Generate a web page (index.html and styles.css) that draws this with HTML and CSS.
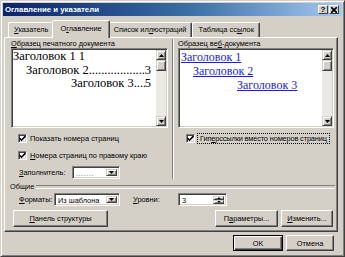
FILE: index.html
```html
<!DOCTYPE html>
<html lang="ru">
<head>
  <meta charset="UTF-8">
  <title>Оглавление и указатели</title>
  <link rel="stylesheet" href="styles.css">
</head>
<body>
  <div class="dialog">
    <div class="titlebar">
      <span class="title">Оглавление и указатели</span>
      <span class="tbtn">?</span>
      <span class="tbtn close">
        <svg width="6" height="6" viewBox="0 0 6 6"><path d="M0 0L6 6M6 0L0 6" stroke="#000" stroke-width="1.6"/></svg>
      </span>
    </div>

    <div class="tabs">
      <div class="tab"><u>У</u>казатель</div>
      <div class="tab active">О<u>г</u>лавление</div>
      <div class="tab">Список ил<u>л</u>юстраций</div>
      <div class="tab">Таблица сс<u>ы</u>лок</div>
    </div>

    <div class="panel">
      <div class="samples">
        <div class="col col-print">
          <div class="caption"><u>О</u>бразец печатного документа</div>
          <div class="preview">
            <div class="sheet print">
              <div class="toc-line">Заголовок 1 1</div>
              <div class="toc-line lvl2"><span>Заголовок 2</span><span class="leader"></span><span>3</span></div>
              <div class="toc-line lvl3"><span>Заголовок 3</span><span class="leader"></span><span>5</span></div>
            </div>
            <div class="scrollbar">
              <span class="sbtn"><svg width="5" height="3" viewBox="0 0 5 3"><path d="M2.5 0L5 3H0z"/></svg></span>
              <span class="thumb"></span>
              <span class="track"></span>
              <span class="sbtn"><svg width="5" height="3" viewBox="0 0 5 3"><path d="M0 0h5L2.5 3z"/></svg></span>
            </div>
          </div>
          <div class="check first">
            <span class="box"><svg width="7" height="7" viewBox="0 0 7 7"><path d="M0.5 3.2l2 2 4-4.2" stroke="#000" stroke-width="1.6" fill="none"/></svg></span>
            Показать номера страниц
          </div>
          <div class="check second">
            <span class="box"><svg width="7" height="7" viewBox="0 0 7 7"><path d="M0.5 3.2l2 2 4-4.2" stroke="#000" stroke-width="1.6" fill="none"/></svg></span>
            <span><u>Н</u>омера страниц по правому краю</span>
          </div>
          <div class="field-row fill-row">
            <span class="lbl lbl-fill"><u>З</u>аполнитель:</span>
            <div class="combo combo-fill">
              <span class="value dots">.......</span>
              <span class="drop"><svg width="5" height="3" viewBox="0 0 5 3"><path d="M0 0h5L2.5 3z"/></svg></span>
            </div>
          </div>
        </div>

        <div class="vsep"></div>

        <div class="col col-web">
          <div class="caption">Образец ве<u>б</u>-документа</div>
          <div class="preview">
            <div class="sheet web">
              <div class="toc-line"><a>Заголовок 1</a></div>
              <div class="toc-line lvl2"><a>Заголовок 2</a></div>
              <div class="toc-line lvl3-web"><a>Заголовок 3</a></div>
            </div>
            <div class="scrollbar">
              <span class="sbtn"><svg width="5" height="3" viewBox="0 0 5 3"><path d="M2.5 0L5 3H0z"/></svg></span>
              <span class="thumb"></span>
              <span class="track"></span>
              <span class="sbtn"><svg width="5" height="3" viewBox="0 0 5 3"><path d="M0 0h5L2.5 3z"/></svg></span>
            </div>
          </div>
          <div class="check first web-check">
            <span class="box"><svg width="7" height="7" viewBox="0 0 7 7"><path d="M0.5 3.2l2 2 4-4.2" stroke="#000" stroke-width="1.6" fill="none"/></svg></span>
            <span class="focus">Гип<u>е</u>рссылки вместо номеров страниц</span>
          </div>
        </div>
      </div>

      <div class="group-title"><span>Общие</span></div>

      <div class="field-row formats-row">
        <span class="lbl lbl-formats"><u>Ф</u>орматы:</span>
        <div class="combo combo-formats">
          <span class="value">Из шаблона</span>
          <span class="drop"><svg width="5" height="3" viewBox="0 0 5 3"><path d="M0 0h5L2.5 3z"/></svg></span>
        </div>
        <span class="lbl lbl-levels"><u>У</u>ровни:</span>
        <div class="combo spin">
          <span class="value">3</span>
          <span class="spin-btns">
            <span class="sbtn"><svg width="5" height="3" viewBox="0 0 5 3"><path d="M2.5 0L5 3H0z"/></svg></span>
            <span class="sbtn"><svg width="5" height="3" viewBox="0 0 5 3"><path d="M0 0h5L2.5 3z"/></svg></span>
          </span>
        </div>
      </div>

      <div class="button-row">
        <button class="btn btn-outline"><u>П</u>анель структуры</button>
        <span class="spacer"></span>
        <button class="btn btn-params">П<u>а</u>раметры...</button>
        <button class="btn btn-change"><u>И</u>зменить...</button>
      </div>
    </div>

    <div class="footer">
      <button class="btn btn-ok">OK</button>
      <button class="btn btn-cancel">Отмена</button>
    </div>
  </div>
</body>
</html>
```

FILE: styles.css
```css
* {
  box-sizing: border-box;
}
body {
  margin: 0;
  background: #d4d0c8;
  font-family: "Liberation Sans", Arial, sans-serif;
  font-size: 7.4px;
  color: #000;
}
.dialog {
  width: 345px;
  height: 257px;
  display: flex;
  flex-direction: column;
  padding: 2px;
  background: #d4d0c8;
  border: 1px solid;
  border-color: #d4d0c8 #404040 #404040 #d4d0c8;
  box-shadow: inset 1px 1px #fff, inset -1px -1px #808080;
}

/* title */
.titlebar {
  height: 13px;
  display: flex;
  align-items: center;
  gap: 1px;
  padding: 0 3px 0 2px;
  background: linear-gradient(to right, #0a246a, #3a6ea5 55%, #a6caf0);
  color: #fff;
  font-weight: bold;
  font-size: 7.8px;
}
.title {
  flex: 1;
}
.tbtn {
  width: 10px;
  height: 9px;
  display: flex;
  align-items: center;
  justify-content: center;
  background: #d4d0c8;
  color: #000;
  font-size: 8px;
  border: 1px solid;
  border-color: #fff #404040 #404040 #fff;
}

/* tabs */
.tabs {
  height: 17px;
  margin-top: 4px;
  padding-left: 5px;
  display: flex;
  align-items: flex-end;
}
.tab {
  height: 15px;
  line-height: 13px;
  padding: 0 5px;
  border: 1px solid;
  border-bottom: none;
  border-color: #fff #404040 transparent #fff;
  border-radius: 2px 2px 0 0;
  box-shadow: inset -1px 0 #808080;
  white-space: nowrap;
}
.tab.active {
  position: relative;
  z-index: 1;
  height: 18px;
  line-height: 15px;
  margin: 0 -2px -1px;
  padding: 0 7px;
  background: #d4d0c8;
}

/* panel */
.panel {
  height: 195px;
  margin: 0 4px 0 1px;
  padding: 1px 3px 3px 6px;
  border: 1px solid;
  border-color: #fff #404040 #404040 #fff;
  box-shadow: inset -1px -1px #808080;
}
.samples {
  display: flex;
}
.col-print {
  width: 157px;
}
.col-web {
  flex: 1;
}
.vsep {
  width: 2px;
  margin: 0 4px;
  border-left: 1px solid #808080;
  border-right: 1px solid #fff;
}
.caption {
  height: 9px;
  line-height: 9px;
  white-space: nowrap;
}
.preview {
  height: 80px;
  display: flex;
  padding: 1px;
  background: #fff;
  border: 1px solid;
  border-color: #808080 #fff #fff #808080;
  box-shadow: inset 1px 1px #404040, inset -1px -1px #d4d0c8;
}
.sheet {
  flex: 1;
  font-family: "Liberation Serif", "Times New Roman", serif;
  white-space: nowrap;
  overflow: hidden;
}
.sheet.print {
  font-size: 12.5px;
  line-height: 13.5px;
  padding-right: 5px;
}
.sheet.web {
  font-size: 12px;
  line-height: 14px;
  padding-left: 1px;
}
.toc-line {
  display: flex;
}
.print .lvl2 {
  padding-left: 13px;
}
.print .lvl3 {
  padding-left: 58px;
}
.web .lvl2 {
  padding-left: 12px;
}
.web .lvl3-web {
  padding-left: 56px;
}
.leader {
  flex: 1;
  overflow: hidden;
}
.leader::before {
  content: "..............................................................";
}
.web a {
  color: #1c1cdc;
  text-decoration: underline;
}

/* scrollbar */
.scrollbar {
  width: 10px;
  display: flex;
  flex-direction: column;
}
.sbtn,
.thumb,
.drop {
  display: flex;
  align-items: center;
  justify-content: center;
  background: #d4d0c8;
  border: 1px solid;
  border-color: #d4d0c8 #404040 #404040 #d4d0c8;
  box-shadow: inset 1px 1px #fff, inset -1px -1px #808080;
}
.scrollbar .sbtn {
  height: 10px;
}
.thumb {
  height: 11px;
}
.track {
  flex: 1;
  background: #ebe9e4;
}

/* checkboxes */
.check {
  height: 11px;
  display: flex;
  align-items: center;
  gap: 3px;
  padding-left: 7px;
  white-space: nowrap;
}
.check.first {
  margin-top: 5px;
}
.check.second {
  margin-top: 6px;
}
.web-check {
  padding-left: 8px;
  gap: 2px;
}
.box {
  width: 9px;
  height: 9px;
  display: flex;
  align-items: center;
  justify-content: center;
  background: #fff;
  border: 1px solid;
  border-color: #808080 #fff #fff #808080;
  box-shadow: inset 1px 1px #404040, inset -1px -1px #d4d0c8;
}
.focus {
  padding: 0 2px;
  line-height: 9px;
  letter-spacing: -0.15px;
  border: 1px dotted #000;
}

/* fields */
.field-row {
  height: 13px;
  display: flex;
  align-items: center;
}
.fill-row {
  margin-top: 5px;
}
.formats-row {
  margin-top: 2px;
}
.lbl {
  padding-left: 8px;
  white-space: nowrap;
}
.lbl-fill {
  width: 61px;
}
.lbl-formats {
  width: 43px;
}
.lbl-levels {
  width: 58px;
  padding-left: 13px;
}
.combo {
  height: 13px;
  display: flex;
  padding: 2px;
  background: #fff;
  border: 1px solid;
  border-color: #808080 #fff #fff #808080;
  box-shadow: inset 1px 1px #404040, inset -1px -1px #d4d0c8;
}
.combo .value {
  flex: 1;
  line-height: 9px;
  padding-left: 1px;
  white-space: nowrap;
}
.combo .dots {
  color: #3d6b3d;
  letter-spacing: 0.5px;
}
.drop {
  width: 11px;
}
.combo-fill {
  width: 48px;
}
.combo-formats {
  width: 66px;
}
.spin {
  width: 49px;
}
.spin-btns {
  width: 11px;
  display: flex;
  flex-direction: column;
}
.spin-btns .sbtn {
  flex: 1;
}
.spin-btns svg {
  width: 4px;
  height: 2px;
}

/* general group */
.group-title {
  height: 10px;
  margin: 2px -1px 0 -1px;
  display: flex;
  align-items: center;
  gap: 2px;
}
.group-title::after {
  content: "";
  flex: 1;
  height: 2px;
  margin-top: 1px;
  border-top: 1px solid #808080;
  border-bottom: 1px solid #fff;
}

/* buttons */
.btn {
  height: 17px;
  padding: 0;
  font-family: inherit;
  font-size: 7.4px;
  color: #000;
  background: #d4d0c8;
  border: 1px solid;
  border-color: #fff #404040 #404040 #fff;
  box-shadow: inset -1px -1px #808080;
  white-space: nowrap;
}
.button-row {
  margin-top: 4px;
  display: flex;
  gap: 3px;
  padding-right: 1px;
}
.spacer {
  flex: 1;
}
.btn-outline {
  width: 95px;
  margin-left: 2px;
}
.btn-params {
  width: 63px;
}
.btn-change {
  width: 52px;
}
.footer {
  margin-top: 3px;
  padding-right: 8px;
  display: flex;
  justify-content: flex-end;
  gap: 3px;
}
.footer .btn {
  height: 16px;
}
.btn-ok {
  width: 50px;
  border-color: #000;
  box-shadow: inset 1px 1px #fff, inset -1px -1px #404040, inset -2px -2px #808080;
}
.btn-cancel {
  width: 48px;
}
```
